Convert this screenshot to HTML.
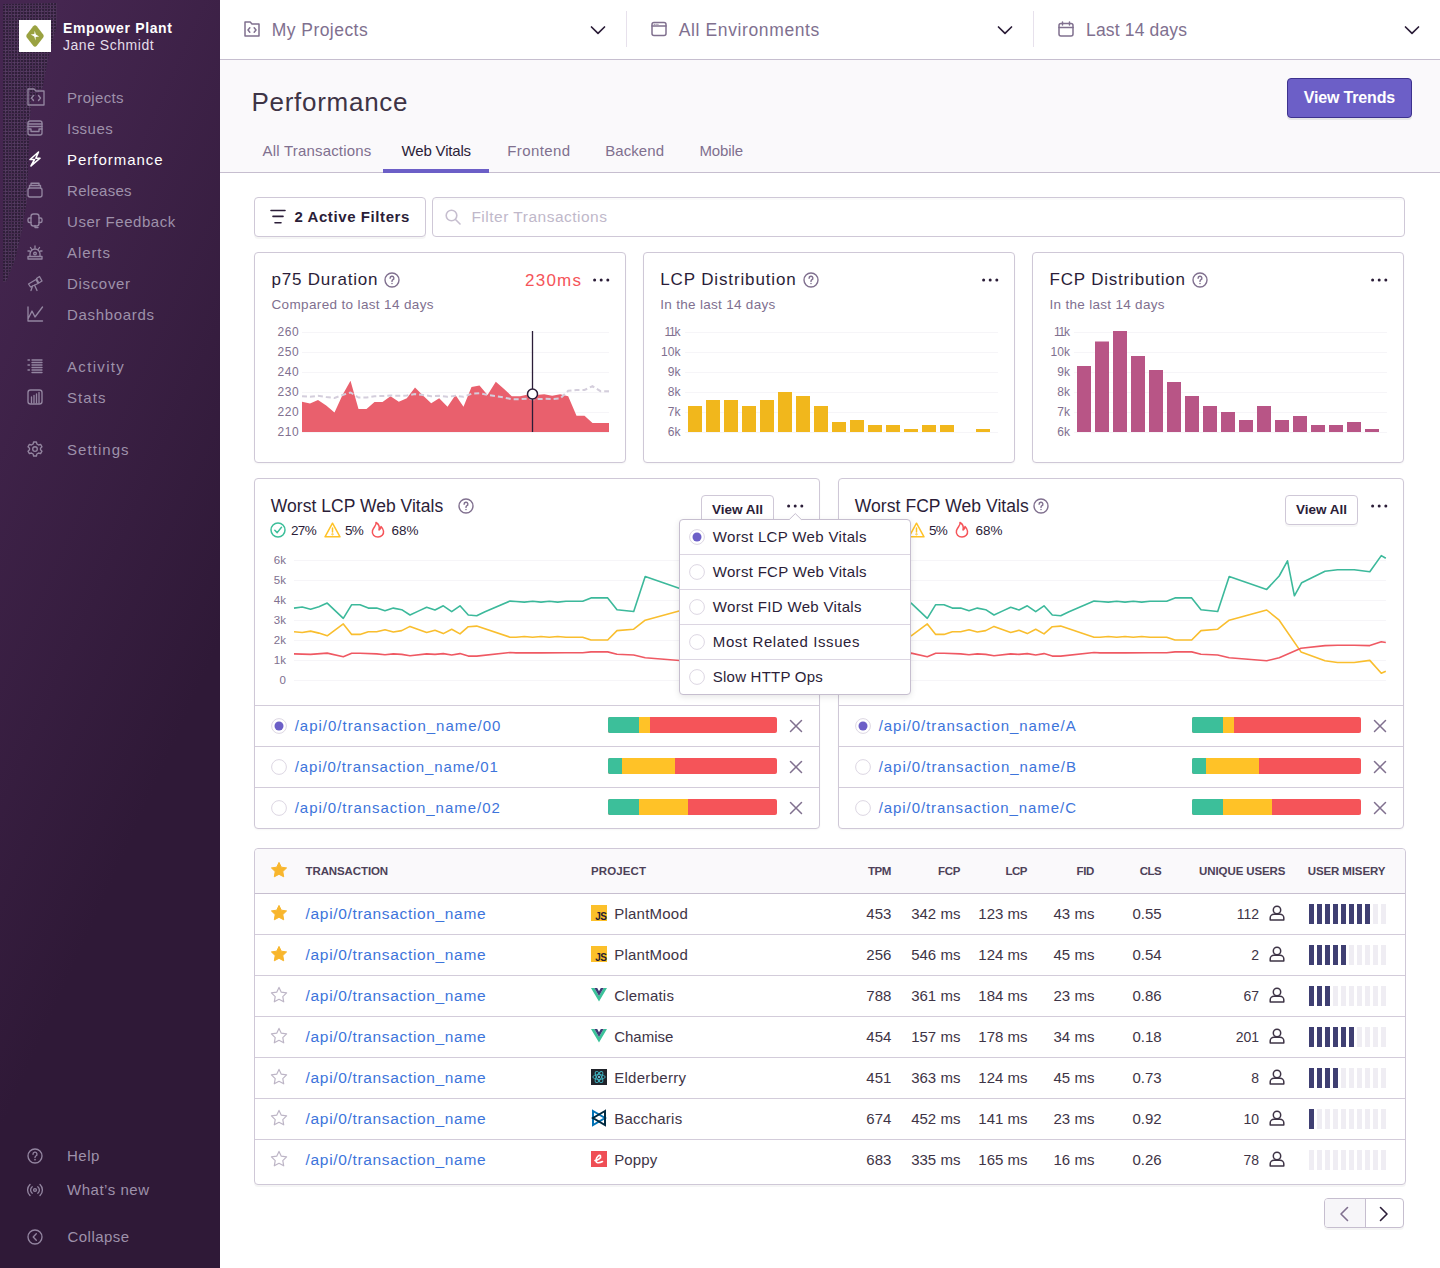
<!DOCTYPE html>
<html><head><meta charset="utf-8"><title>Performance</title><style>
*{box-sizing:border-box}
html,body{margin:0;padding:0;width:1440px;height:1268px;overflow:hidden;background:#fff}
body{position:relative;font-family:"Liberation Sans",sans-serif}
.t{position:absolute;white-space:pre;line-height:1;}
.ic{position:absolute;overflow:visible}
.card{position:absolute;border:1px solid #CFC8D7;border-radius:4px;background:#fff;box-shadow:0 1px 2px rgba(0,0,0,0.04)}
#sb{position:absolute;left:0;top:0;width:220px;height:1268px;background:linear-gradient(294.17deg,#2f1937 35.57%,#452650 92.42%,#452650 92.42%)}
#sbtex{position:absolute;left:0;top:0;width:70px;height:300px;
 background-color:rgba(100,92,112,0.20);
 background-image:radial-gradient(circle at 1px 1px, rgba(30,20,40,0.6) 0.8px, transparent 1.1px),radial-gradient(circle at 1px 1px, rgba(140,130,165,0.25) 0.6px, transparent 0.9px);
 background-size:3px 3px,4px 4px;background-position:0 0,1px 2px;
 clip-path:polygon(3px 4px,57px 3px,57px 25px,50px 50px,45px 75px,42px 90px,31px 100px,29px 140px,27px 200px,22px 230px,15px 260px,6px 282px,3px 282px)}
</style></head>
<body>
<div id='sb'></div><div id='sbtex'></div>
<div style='position:absolute;left:19px;top:20px;width:32px;height:32px;background:#fff'></div>
<svg class='ic' style='left:19px;top:20px;width:32px;height:32px;' viewBox='0 0 32 32'><path d='M16 5.2 Q17 5.2 17.8 6.2 L24.2 14.4 Q25.4 16 24.2 17.6 L17.8 25.8 Q17 26.8 16 26.8 Q15 26.8 14.2 25.8 L7.8 17.6 Q6.6 16 7.8 14.4 L14.2 6.2 Q15 5.2 16 5.2 Z' fill='#9AA241'/><path d='M15.7 10.8 L16.9 14.6 L20.2 16.5 L16.7 16.9 L16.5 20.4 L15.2 16.4 L11.7 14.5 L15.3 14.1 Z' fill='#fff'/></svg>
<div class='t' style='left:63.00px;top:21.15px;font-size:14px;color:#FFFFFF;font-weight:700;letter-spacing:0.655px;'>Empower Plant</div>
<div class='t' style='left:63.00px;top:37.95px;font-size:14px;color:#E4DDE9;letter-spacing:0.525px;'>Jane Schmidt</div>
<div class='t' style='left:67.00px;top:89.90px;font-size:15px;color:#9E91AA;letter-spacing:0.330px;'>Projects</div>
<div class='t' style='left:67.00px;top:120.90px;font-size:15px;color:#9E91AA;letter-spacing:0.468px;'>Issues</div>
<div class='t' style='left:67.00px;top:151.90px;font-size:15px;color:#FFFFFF;letter-spacing:0.983px;'>Performance</div>
<div class='t' style='left:67.00px;top:182.90px;font-size:15px;color:#9E91AA;letter-spacing:0.293px;'>Releases</div>
<div class='t' style='left:67.00px;top:213.90px;font-size:15px;color:#9E91AA;letter-spacing:0.548px;'>User Feedback</div>
<div class='t' style='left:67.00px;top:244.90px;font-size:15px;color:#9E91AA;letter-spacing:0.911px;'>Alerts</div>
<div class='t' style='left:67.00px;top:275.90px;font-size:15px;color:#9E91AA;letter-spacing:0.677px;'>Discover</div>
<div class='t' style='left:67.00px;top:306.90px;font-size:15px;color:#9E91AA;letter-spacing:0.690px;'>Dashboards</div>
<div class='t' style='left:67.00px;top:358.90px;font-size:15px;color:#9E91AA;letter-spacing:1.326px;'>Activity</div>
<div class='t' style='left:67.00px;top:389.90px;font-size:15px;color:#9E91AA;letter-spacing:1.053px;'>Stats</div>
<div class='t' style='left:67.00px;top:441.90px;font-size:15px;color:#9E91AA;letter-spacing:1.057px;'>Settings</div>
<div class='t' style='left:67.00px;top:1148.10px;font-size:15px;color:#9E91AA;letter-spacing:0.480px;'>Help</div>
<div class='t' style='left:67.00px;top:1182.10px;font-size:15px;color:#9E91AA;letter-spacing:0.526px;'>What’s new</div>
<div class='t' style='left:67.50px;top:1229.10px;font-size:15px;color:#9E91AA;letter-spacing:0.475px;'>Collapse</div>
<svg class='ic' style='left:27px;top:88px;width:18px;height:18px;' viewBox='0 0 18 18'><path d='M1 1 H7 L9 3 H17 V17 H1 Z' stroke='#9385A0' stroke-width='1.35' fill='none' stroke-linejoin='round' stroke-linecap='round'/><path d='M6.5 7.5 L4.5 10 L6.5 12.5 M11.5 7.5 L13.5 10 L11.5 12.5' stroke='#9385A0' stroke-width='1.35' fill='none' stroke-linejoin='round' stroke-linecap='round'/></svg>
<svg class='ic' style='left:27px;top:120px;width:16px;height:16px;' viewBox='0 0 16 16'><rect x='1' y='1' width='14' height='14' rx='2' stroke='#9385A0' stroke-width='1.35' fill='none' stroke-linejoin='round' stroke-linecap='round'/><path d='M1 4 H15 M1 6.5 H15 M1 9 H4 V11.5 H12 V9 H15' stroke='#9385A0' stroke-width='1.35' fill='none' stroke-linejoin='round' stroke-linecap='round'/></svg>
<svg class='ic' style='left:28px;top:151px;width:14px;height:16px;' viewBox='0 0 14 16'><path d='M10.5 1 L2 8.5 L6.5 8.5 L3 15 L12 7.2 L7.8 7.2 Z' stroke='#FFFFFF' stroke-width='1.6' fill='none' stroke-linejoin='round' stroke-linecap='round'/></svg>
<svg class='ic' style='left:27px;top:182px;width:16px;height:16px;' viewBox='0 0 16 16'><rect x='1' y='6' width='14' height='9' rx='2' stroke='#9385A0' stroke-width='1.35' fill='none' stroke-linejoin='round' stroke-linecap='round'/><path d='M2.5 6 V3.5 H13.5 V6 M4 3.5 V1.2 H12 V3.5' stroke='#9385A0' stroke-width='1.35' fill='none' stroke-linejoin='round' stroke-linecap='round'/></svg>
<svg class='ic' style='left:27px;top:213px;width:16px;height:16px;' viewBox='0 0 16 16'><rect x='4' y='1' width='8' height='12' rx='2.5' stroke='#9385A0' stroke-width='1.35' fill='none' stroke-linejoin='round' stroke-linecap='round'/><path d='M4 5 H2.5 A1.5 1.5 0 0 0 1 6.5 V8 A1.5 1.5 0 0 0 2.5 9.5 H4 M12 5 H13.5 A1.5 1.5 0 0 1 15 6.5 V8 A1.5 1.5 0 0 1 13.5 9.5 H12 M8 12.5 V14.5 H11' stroke='#9385A0' stroke-width='1.35' fill='none' stroke-linejoin='round' stroke-linecap='round'/></svg>
<svg class='ic' style='left:27px;top:244px;width:16px;height:16px;' viewBox='0 0 16 16'><path d='M1 15 H15 V12.5 H1 Z M3 12.5 V10 A5 5 0 0 1 13 10 V12.5 M8 2 V4 M3.5 3.5 L4.5 5 M12.5 3.5 L11.5 5 M1 7 H2.5 M13.5 7 H15' stroke='#9385A0' stroke-width='1.35' fill='none' stroke-linejoin='round' stroke-linecap='round'/><circle cx='8' cy='9.5' r='1.3' stroke='#9385A0' stroke-width='1.35' fill='none' stroke-linejoin='round' stroke-linecap='round'/></svg>
<svg class='ic' style='left:27px;top:275px;width:16px;height:16px;' viewBox='0 0 16 16'><path d='M1.5 9 L9 4.5 L11 8.5 L3.5 12 Z M9.5 3.5 L12.5 1.5 L15 6 L11.8 8 Z M5.5 11 L4 15.5 M7.5 10 L10 15.5' stroke='#9385A0' stroke-width='1.35' fill='none' stroke-linejoin='round' stroke-linecap='round'/></svg>
<svg class='ic' style='left:27px;top:306px;width:16px;height:16px;' viewBox='0 0 16 16'><path d='M1 1 V15 H15.5 M1 13 L5 5 L8 11 L15.5 1' stroke='#9385A0' stroke-width='1.35' fill='none' stroke-linejoin='round' stroke-linecap='round'/></svg>
<svg class='ic' style='left:27px;top:358px;width:16px;height:16px;' viewBox='0 0 16 16'><path d='M1 2 H2.5 M1 7 H2.5 M1 12 H2.5 M5 2 H15 M5 4.5 H15 M5 7 H15 M5 9.5 H15 M5 12 H15 M5 14.5 H15' stroke='#9385A0' stroke-width='1.35' fill='none' stroke-linejoin='round' stroke-linecap='round'/></svg>
<svg class='ic' style='left:27px;top:389px;width:16px;height:16px;' viewBox='0 0 16 16'><rect x='1' y='1' width='14' height='14' rx='2.5' stroke='#9385A0' stroke-width='1.35' fill='none' stroke-linejoin='round' stroke-linecap='round'/><path d='M4.5 14 V8 M7 14 V6.5 M9.5 14 V5 M12 14 V3.5' stroke='#9385A0' stroke-width='1.35' fill='none' stroke-linejoin='round' stroke-linecap='round'/></svg>
<svg class='ic' style='left:27px;top:441px;width:16px;height:16px;' viewBox='0 0 16 16'><path d='M6.6 1 H9.4 L9.9 3 L11.6 4 L13.6 3.4 L15 5.8 L13.5 7.2 V8.8 L15 10.2 L13.6 12.6 L11.6 12 L9.9 13 L9.4 15 H6.6 L6.1 13 L4.4 12 L2.4 12.6 L1 10.2 L2.5 8.8 V7.2 L1 5.8 L2.4 3.4 L4.4 4 L6.1 3 Z' stroke='#9385A0' stroke-width='1.35' fill='none' stroke-linejoin='round' stroke-linecap='round'/><circle cx='8' cy='8' r='2.3' stroke='#9385A0' stroke-width='1.35' fill='none' stroke-linejoin='round' stroke-linecap='round'/></svg>
<svg class='ic' style='left:27px;top:1148px;width:16px;height:16px;' viewBox='0 0 16 16'><circle cx='8' cy='8' r='7' stroke='#9385A0' stroke-width='1.35' fill='none' stroke-linejoin='round' stroke-linecap='round'/><path d='M6 6.3 A2 2 0 1 1 8.8 8 C8.2 8.4 8 8.8 8 9.5' stroke='#9385A0' stroke-width='1.35' fill='none' stroke-linejoin='round' stroke-linecap='round'/><circle cx='8' cy='11.7' r='0.5' fill='#9385A0' stroke='#9385A0' stroke-width='0.8'/></svg>
<svg class='ic' style='left:27px;top:1182px;width:16px;height:16px;' viewBox='0 0 16 16'><circle cx='8' cy='8' r='1.4' stroke='#9385A0' stroke-width='1.35' fill='none' stroke-linejoin='round' stroke-linecap='round'/><path d='M5.2 4.8 A4 4 0 0 0 5.2 11.2 M10.8 4.8 A4 4 0 0 1 10.8 11.2 M3 2.5 A7.5 7.5 0 0 0 3 13.5 M13 2.5 A7.5 7.5 0 0 1 13 13.5' stroke='#9385A0' stroke-width='1.35' fill='none' stroke-linejoin='round' stroke-linecap='round'/></svg>
<svg class='ic' style='left:27px;top:1229px;width:16px;height:16px;' viewBox='0 0 16 16'><circle cx='8' cy='8' r='7' stroke='#9385A0' stroke-width='1.35' fill='none' stroke-linejoin='round' stroke-linecap='round'/><path d='M9.3 4.8 L6.2 8 L9.3 11.2' stroke='#9385A0' stroke-width='1.35' fill='none' stroke-linejoin='round' stroke-linecap='round'/></svg>
<div style='position:absolute;left:220px;top:0;width:1220px;height:60px;background:#fff;border-bottom:1px solid #C6BECF'></div>
<svg class='ic' style='left:244px;top:21px;width:16px;height:16px;' viewBox='0 0 16 16'><path d='M1 1 H6.2 L8 3 H15 V15 H1 Z' stroke='#80708F' stroke-width='1.5' fill='none' stroke-linejoin='round' stroke-linecap='round'/><path d='M5.8 6.8 L4 9 L5.8 11.2 M10.2 6.8 L12 9 L10.2 11.2' stroke='#80708F' stroke-width='1.5' fill='none' stroke-linejoin='round' stroke-linecap='round'/></svg>
<div class='t' style='left:271.70px;top:22.19px;font-size:17.5px;color:#80708F;letter-spacing:0.459px;'>My Projects</div>
<svg class='ic' style='left:590px;top:25px;width:16px;height:10px;' viewBox='0 0 16 10'><path d='M1.5 2 L8 8.3 L14.5 2' stroke='#2B1D38' stroke-width='1.7' fill='none' stroke-linejoin='round' stroke-linecap='round'/></svg>
<div style='position:absolute;left:626px;top:11px;width:1px;height:36px;background:#E7E1EC'></div>
<svg class='ic' style='left:651px;top:21px;width:16px;height:16px;' viewBox='0 0 16 16'><rect x='1' y='1.5' width='14' height='13' rx='2' stroke='#80708F' stroke-width='1.5' fill='none' stroke-linejoin='round' stroke-linecap='round'/><path d='M1 5 H15' stroke='#80708F' stroke-width='1.5' fill='none' stroke-linejoin='round' stroke-linecap='round'/><path d='M3.2 3.3 H3.4 M5 3.3 H5.2 M6.8 3.3 H7' stroke='#80708F' stroke-width='1.1' stroke-linecap='round'/></svg>
<div class='t' style='left:678.75px;top:22.39px;font-size:17.5px;color:#80708F;letter-spacing:0.619px;'>All Environments</div>
<svg class='ic' style='left:997px;top:25px;width:16px;height:10px;' viewBox='0 0 16 10'><path d='M1.5 2 L8 8.3 L14.5 2' stroke='#2B1D38' stroke-width='1.7' fill='none' stroke-linejoin='round' stroke-linecap='round'/></svg>
<div style='position:absolute;left:1033px;top:11px;width:1px;height:36px;background:#E7E1EC'></div>
<svg class='ic' style='left:1058px;top:21px;width:16px;height:16px;' viewBox='0 0 16 16'><rect x='1' y='2.5' width='14' height='12.5' rx='2' stroke='#80708F' stroke-width='1.5' fill='none' stroke-linejoin='round' stroke-linecap='round'/><path d='M1 6.5 H15 M4.5 1 V4 M11.5 1 V4' stroke='#80708F' stroke-width='1.5' fill='none' stroke-linejoin='round' stroke-linecap='round'/></svg>
<div class='t' style='left:1086.00px;top:22.39px;font-size:17.5px;color:#80708F;letter-spacing:0.161px;'>Last 14 days</div>
<svg class='ic' style='left:1404px;top:25px;width:16px;height:10px;' viewBox='0 0 16 10'><path d='M1.5 2 L8 8.3 L14.5 2' stroke='#2B1D38' stroke-width='1.7' fill='none' stroke-linejoin='round' stroke-linecap='round'/></svg>
<div style='position:absolute;left:220px;top:60px;width:1220px;height:113px;background:#FAF9FB;border-bottom:1px solid #C6BECF'></div>
<div class='t' style='left:251.50px;top:89.19px;font-size:26px;color:#3E3446;letter-spacing:0.716px;'>Performance</div>
<div style='position:absolute;left:1287px;top:78px;width:125px;height:40px;background:#6C5FC7;border:1px solid #3D328E;border-radius:4px;box-shadow:0 2px 0 rgba(0,0,0,0.08)'></div>
<div class='t' style='left:1303.80px;top:90.06px;font-size:16px;color:#FFFFFF;font-weight:700;letter-spacing:-0.168px;'>View Trends</div>
<div class='t' style='left:262.60px;top:143.30px;font-size:15px;color:#80708F;letter-spacing:0.187px;'>All Transactions</div>
<div class='t' style='left:401.60px;top:143.30px;font-size:15px;color:#2B1D38;letter-spacing:-0.184px;'>Web Vitals</div>
<div class='t' style='left:507.25px;top:143.30px;font-size:15px;color:#80708F;letter-spacing:0.393px;'>Frontend</div>
<div class='t' style='left:605.30px;top:143.30px;font-size:15px;color:#80708F;letter-spacing:0.054px;'>Backend</div>
<div class='t' style='left:699.40px;top:143.30px;font-size:15px;color:#80708F;letter-spacing:-0.097px;'>Mobile</div>
<div style='position:absolute;left:383px;top:169px;width:106px;height:4px;background:#6C5FC7'></div>
<div class='card' style='left:254px;top:197px;width:172px;height:40px;box-shadow:0 2px 0 rgba(0,0,0,0.04)'></div>
<svg class='ic' style='left:270px;top:208px;width:16px;height:16px;' viewBox='0 0 16 16'><path d='M1 2.5 H15 M3 8.4 H13 M5 14.8 H11' stroke='#2B1D38' stroke-width='1.6' fill='none' stroke-linecap='round'/></svg>
<div class='t' style='left:294.40px;top:209.30px;font-size:15px;color:#2B1D38;font-weight:700;letter-spacing:0.589px;'>2 Active Filters</div>
<div class='card' style='left:432px;top:197px;width:973px;height:40px;box-shadow:inset 0 2px 0 rgba(0,0,0,0.02)'></div>
<svg class='ic' style='left:445px;top:209px;width:16px;height:16px;' viewBox='0 0 16 16'><circle cx='6.5' cy='6.5' r='5.3' stroke='#C6BECF' stroke-width='1.6' fill='none' stroke-linecap='round'/><path d='M10.5 10.5 L15 15' stroke='#C6BECF' stroke-width='1.6' fill='none' stroke-linecap='round'/></svg>
<div class='t' style='left:471.40px;top:209.38px;font-size:15.5px;color:#C0B8CA;letter-spacing:0.498px;'>Filter Transactions</div>
<div class='card' style='left:254px;top:252px;width:372px;height:211px;'></div>
<div class='t' style='left:271.50px;top:271.41px;font-size:17px;color:#2B1D38;letter-spacing:0.787px;'>p75 Duration</div>
<svg class='ic' style='left:384px;top:272px;width:16px;height:16px;' viewBox='0 0 16 16'><circle cx='8' cy='8' r='7' stroke='#80708F' stroke-width='1.4' fill='none' stroke-linecap='round'/><path d='M6.1 6.2 A1.9 1.9 0 1 1 8.7 7.9 C8.1 8.3 8 8.7 8 9.4' stroke='#80708F' stroke-width='1.4' fill='none' stroke-linecap='round'/><circle cx='8' cy='11.6' r='0.45' fill='#80708F' stroke='#80708F' stroke-width='0.7'/></svg>
<div class='t' style='left:525.00px;top:271.61px;font-size:17px;color:#F55459;letter-spacing:1.242px;'>230ms</div>
<svg class='ic' style='left:592.5px;top:278px;width:18px;height:4px;' viewBox='0 0 18 4'><circle cx='1.6' cy='2' r='1.5' fill='#2B1D38'/><circle cx='8.2' cy='2' r='1.5' fill='#2B1D38'/><circle cx='14.8' cy='2' r='1.5' fill='#2B1D38'/></svg>
<div class='t' style='left:271.50px;top:297.57px;font-size:13.5px;color:#80708F;letter-spacing:0.355px;'>Compared to last 14 days</div>
<div style='position:absolute;left:302px;top:332px;width:307px;height:1px;background:#F6F5F8'></div>
<div style='position:absolute;left:302px;top:352px;width:307px;height:1px;background:#F6F5F8'></div>
<div style='position:absolute;left:302px;top:372px;width:307px;height:1px;background:#F6F5F8'></div>
<div style='position:absolute;left:302px;top:392px;width:307px;height:1px;background:#F6F5F8'></div>
<div style='position:absolute;left:302px;top:412px;width:307px;height:1px;background:#F6F5F8'></div>
<div style='position:absolute;left:302px;top:432px;width:307px;height:1px;background:#F6F5F8'></div>
<div class='t' style='left:277.60px;top:326.04px;font-size:12px;color:#80708F;letter-spacing:0.484px;'>260</div>
<div class='t' style='left:277.60px;top:346.04px;font-size:12px;color:#80708F;letter-spacing:0.484px;'>250</div>
<div class='t' style='left:277.60px;top:366.04px;font-size:12px;color:#80708F;letter-spacing:0.484px;'>240</div>
<div class='t' style='left:277.60px;top:386.04px;font-size:12px;color:#80708F;letter-spacing:0.484px;'>230</div>
<div class='t' style='left:277.60px;top:406.04px;font-size:12px;color:#80708F;letter-spacing:0.484px;'>220</div>
<div class='t' style='left:277.60px;top:426.04px;font-size:12px;color:#80708F;letter-spacing:0.484px;'>210</div>
<svg class='ic' style='left:0;top:0;width:1440px;height:1268px' viewBox='0 0 1440 1268'><path d='M302 432 L302.0 401.8 L310.0 403.5 L318.0 400.0 L326.2 405.5 L334.5 412.5 L342.5 395.0 L350.5 380.8 L358.5 409.0 L366.5 409.0 L374.5 402.0 L382.5 402.0 L390.5 396.2 L398.8 401.8 L406.8 398.2 L415.0 387.5 L423.0 395.5 L431.2 403.2 L439.2 398.2 L447.5 406.8 L455.5 395.0 L463.5 406.8 L471.5 387.0 L479.5 385.5 L487.5 395.0 L495.8 381.8 L503.8 388.8 L511.8 396.2 L520.0 396.2 L528.0 394.5 L536.0 395.0 L544.2 394.2 L552.2 395.8 L560.2 394.2 L568.2 396.2 L576.5 415.8 L584.5 415.8 L592.5 423.0 L600.5 423.0 L609.0 423.0 L609 432 Z' fill='#E9606D'/><path d='M302.0 396.2 L310.0 396.8 L318.0 395.8 L326.2 397.0 L334.5 398.0 L342.5 395.0 L350.5 392.5 L358.5 397.5 L366.5 397.5 L374.5 396.2 L382.5 396.0 L390.5 395.5 L398.8 395.8 L406.8 395.5 L415.0 394.0 L423.0 395.0 L431.2 396.2 L439.2 395.8 L447.5 396.8 L455.5 395.8 L463.5 396.8 L471.5 393.8 L479.5 393.2 L487.5 395.0 L495.8 396.2 L503.8 397.5 L511.8 399.2 L520.0 399.2 L528.0 398.8 L536.0 399.2 L544.2 398.8 L552.2 399.0 L560.2 398.5 L568.2 390.8 L576.5 390.0 L584.5 390.0 L592.5 386.2 L600.5 391.2 L609.0 391.2' fill='none' stroke='#D4CEDC' stroke-width='2' stroke-dasharray='5 3'/><path d='M532.5 331 V432' stroke='#2B1D38' stroke-width='1.3'/><circle cx='532.5' cy='394' r='5' fill='#fff' stroke='#2B1D38' stroke-width='1.5'/></svg>
<div class='card' style='left:643px;top:252px;width:372px;height:211px;'></div>
<div class='t' style='left:660.30px;top:271.41px;font-size:17px;color:#2B1D38;letter-spacing:0.858px;'>LCP Distribution</div>
<svg class='ic' style='left:803px;top:272px;width:16px;height:16px;' viewBox='0 0 16 16'><circle cx='8' cy='8' r='7' stroke='#80708F' stroke-width='1.4' fill='none' stroke-linecap='round'/><path d='M6.1 6.2 A1.9 1.9 0 1 1 8.7 7.9 C8.1 8.3 8 8.7 8 9.4' stroke='#80708F' stroke-width='1.4' fill='none' stroke-linecap='round'/><circle cx='8' cy='11.6' r='0.45' fill='#80708F' stroke='#80708F' stroke-width='0.7'/></svg>
<svg class='ic' style='left:981.5px;top:278px;width:18px;height:4px;' viewBox='0 0 18 4'><circle cx='1.6' cy='2' r='1.5' fill='#2B1D38'/><circle cx='8.2' cy='2' r='1.5' fill='#2B1D38'/><circle cx='14.8' cy='2' r='1.5' fill='#2B1D38'/></svg>
<div class='t' style='left:660.30px;top:297.57px;font-size:13.5px;color:#80708F;letter-spacing:0.301px;'>In the last 14 days</div>
<div style='position:absolute;left:685px;top:332px;width:313px;height:1px;background:#F6F5F8'></div>
<div style='position:absolute;left:685px;top:352px;width:313px;height:1px;background:#F6F5F8'></div>
<div style='position:absolute;left:685px;top:372px;width:313px;height:1px;background:#F6F5F8'></div>
<div style='position:absolute;left:685px;top:392px;width:313px;height:1px;background:#F6F5F8'></div>
<div style='position:absolute;left:685px;top:412px;width:313px;height:1px;background:#F6F5F8'></div>
<div style='position:absolute;left:685px;top:432px;width:313px;height:1px;background:#F6F5F8'></div>
<div class='t' style='left:664.50px;top:326.04px;font-size:12px;color:#80708F;letter-spacing:-1.234px;'>11k</div>
<div class='t' style='left:661.00px;top:346.04px;font-size:12px;color:#80708F;letter-spacing:0.070px;'>10k</div>
<div class='t' style='left:667.81px;top:366.04px;font-size:12px;color:#80708F;'>9k</div>
<div class='t' style='left:667.81px;top:386.04px;font-size:12px;color:#80708F;'>8k</div>
<div class='t' style='left:667.81px;top:406.04px;font-size:12px;color:#80708F;'>7k</div>
<div class='t' style='left:667.81px;top:426.04px;font-size:12px;color:#80708F;'>6k</div>
<div class='card' style='left:1032px;top:252px;width:372px;height:211px;'></div>
<div class='t' style='left:1049.50px;top:271.41px;font-size:17px;color:#2B1D38;letter-spacing:0.803px;'>FCP Distribution</div>
<svg class='ic' style='left:1192px;top:272px;width:16px;height:16px;' viewBox='0 0 16 16'><circle cx='8' cy='8' r='7' stroke='#80708F' stroke-width='1.4' fill='none' stroke-linecap='round'/><path d='M6.1 6.2 A1.9 1.9 0 1 1 8.7 7.9 C8.1 8.3 8 8.7 8 9.4' stroke='#80708F' stroke-width='1.4' fill='none' stroke-linecap='round'/><circle cx='8' cy='11.6' r='0.45' fill='#80708F' stroke='#80708F' stroke-width='0.7'/></svg>
<svg class='ic' style='left:1370.5px;top:278px;width:18px;height:4px;' viewBox='0 0 18 4'><circle cx='1.6' cy='2' r='1.5' fill='#2B1D38'/><circle cx='8.2' cy='2' r='1.5' fill='#2B1D38'/><circle cx='14.8' cy='2' r='1.5' fill='#2B1D38'/></svg>
<div class='t' style='left:1049.50px;top:297.57px;font-size:13.5px;color:#80708F;letter-spacing:0.301px;'>In the last 14 days</div>
<div style='position:absolute;left:1074px;top:332px;width:313px;height:1px;background:#F6F5F8'></div>
<div style='position:absolute;left:1074px;top:352px;width:313px;height:1px;background:#F6F5F8'></div>
<div style='position:absolute;left:1074px;top:372px;width:313px;height:1px;background:#F6F5F8'></div>
<div style='position:absolute;left:1074px;top:392px;width:313px;height:1px;background:#F6F5F8'></div>
<div style='position:absolute;left:1074px;top:412px;width:313px;height:1px;background:#F6F5F8'></div>
<div style='position:absolute;left:1074px;top:432px;width:313px;height:1px;background:#F6F5F8'></div>
<div class='t' style='left:1054.00px;top:326.04px;font-size:12px;color:#80708F;letter-spacing:-1.234px;'>11k</div>
<div class='t' style='left:1050.50px;top:346.04px;font-size:12px;color:#80708F;letter-spacing:0.070px;'>10k</div>
<div class='t' style='left:1057.31px;top:366.04px;font-size:12px;color:#80708F;'>9k</div>
<div class='t' style='left:1057.31px;top:386.04px;font-size:12px;color:#80708F;'>8k</div>
<div class='t' style='left:1057.31px;top:406.04px;font-size:12px;color:#80708F;'>7k</div>
<div class='t' style='left:1057.31px;top:426.04px;font-size:12px;color:#80708F;'>6k</div>
<svg class='ic' style='left:0;top:0;width:1440px;height:1268px' viewBox='0 0 1440 1268'><rect x='688' y='406' width='14' height='26' fill='#F1B71C'/><rect x='706' y='400' width='14' height='32' fill='#F1B71C'/><rect x='724' y='400' width='14' height='32' fill='#F1B71C'/><rect x='742' y='406' width='14' height='26' fill='#F1B71C'/><rect x='760' y='400' width='14' height='32' fill='#F1B71C'/><rect x='778' y='392' width='14' height='40' fill='#F1B71C'/><rect x='796' y='396' width='14' height='36' fill='#F1B71C'/><rect x='814' y='406' width='14' height='26' fill='#F1B71C'/><rect x='832' y='422' width='14' height='10' fill='#F1B71C'/><rect x='850' y='420' width='14' height='12' fill='#F1B71C'/><rect x='868' y='425' width='14' height='7' fill='#F1B71C'/><rect x='886' y='425' width='14' height='7' fill='#F1B71C'/><rect x='904' y='429' width='14' height='3' fill='#F1B71C'/><rect x='922' y='425' width='14' height='7' fill='#F1B71C'/><rect x='940' y='425' width='14' height='7' fill='#F1B71C'/><rect x='976' y='429' width='14' height='3' fill='#F1B71C'/><rect x='1077' y='366' width='14' height='66' fill='#B85586'/><rect x='1095' y='341.5' width='14' height='90.5' fill='#B85586'/><rect x='1113' y='331' width='14' height='101' fill='#B85586'/><rect x='1131' y='356' width='14' height='76' fill='#B85586'/><rect x='1149' y='370' width='14' height='62' fill='#B85586'/><rect x='1167' y='382' width='14' height='50' fill='#B85586'/><rect x='1185' y='396' width='14' height='36' fill='#B85586'/><rect x='1203' y='406' width='14' height='26' fill='#B85586'/><rect x='1221' y='412' width='14' height='20' fill='#B85586'/><rect x='1239' y='420' width='14' height='12' fill='#B85586'/><rect x='1257' y='406' width='14' height='26' fill='#B85586'/><rect x='1275' y='420' width='14' height='12' fill='#B85586'/><rect x='1293' y='416' width='14' height='16' fill='#B85586'/><rect x='1311' y='425' width='14' height='7' fill='#B85586'/><rect x='1329' y='425' width='14' height='7' fill='#B85586'/><rect x='1347' y='422' width='14' height='10' fill='#B85586'/><rect x='1365' y='429' width='14' height='3' fill='#B85586'/></svg>
<div class='card' style='left:254px;top:478px;width:566px;height:351px;'></div>
<div class='t' style='left:270.80px;top:497.99px;font-size:17.5px;color:#2B1D38;letter-spacing:0.029px;'>Worst LCP Web Vitals</div>
<svg class='ic' style='left:458px;top:498px;width:16px;height:16px;' viewBox='0 0 16 16'><circle cx='8' cy='8' r='7' stroke='#80708F' stroke-width='1.4' fill='none' stroke-linecap='round'/><path d='M6.1 6.2 A1.9 1.9 0 1 1 8.7 7.9 C8.1 8.3 8 8.7 8 9.4' stroke='#80708F' stroke-width='1.4' fill='none' stroke-linecap='round'/><circle cx='8' cy='11.6' r='0.45' fill='#80708F' stroke='#80708F' stroke-width='0.7'/></svg>
<svg class='ic' style='left:270px;top:522px;width:16px;height:16px;' viewBox='0 0 16 16'><circle cx='8' cy='8' r='7' stroke='#3CBF9A' fill='none' stroke-width='1.5' stroke-linecap='round' stroke-linejoin='round'/><path d='M4.8 8.2 L7.2 10.6 L11.5 5.3' stroke='#3CBF9A' fill='none' stroke-width='1.5' stroke-linecap='round' stroke-linejoin='round'/></svg>
<div class='t' style='left:291.00px;top:523.57px;font-size:13.5px;color:#2B1D38;letter-spacing:-0.666px;'>27%</div>
<svg class='ic' style='left:323.5px;top:522px;width:17px;height:16px;' viewBox='0 0 17 16'><path d='M8.5 1.2 L16 14.8 H1 Z' stroke='#FFC227' fill='none' stroke-width='1.5' stroke-linecap='round' stroke-linejoin='round'/><path d='M8.5 6 V10' stroke='#FFC227' fill='none' stroke-width='1.5' stroke-linecap='round' stroke-linejoin='round'/><circle cx='8.5' cy='12.3' r='0.4' stroke='#FFC227' fill='none' stroke-width='1.5' stroke-linecap='round' stroke-linejoin='round'/></svg>
<div class='t' style='left:345.00px;top:523.57px;font-size:13.5px;color:#2B1D38;letter-spacing:-0.816px;'>5%</div>
<svg class='ic' style='left:371px;top:521px;width:14px;height:17px;' viewBox='0 0 14 17'><path d='M5 1.5 C6 4 2.5 6 1.5 9.5 C0.5 13.5 3.5 16 7 16 C10.5 16 13 13.5 12.5 10 C12.2 8 11 6.5 10 5.5 C10 7.5 9 8.5 8 9 C8.8 6 7.5 3 5 1.5 Z' stroke='#F55459' fill='none' stroke-width='1.5' stroke-linecap='round' stroke-linejoin='round'/></svg>
<div class='t' style='left:391.50px;top:523.57px;font-size:13.5px;color:#2B1D38;letter-spacing:-0.066px;'>68%</div>
<div class='card' style='left:701px;top:495px;width:73px;height:30px;border-radius:4px;box-shadow:0 2px 0 rgba(0,0,0,0.03)'></div>
<div class='t' style='left:712.00px;top:503.37px;font-size:13.5px;color:#2B1D38;font-weight:700;'>View All</div>
<svg class='ic' style='left:787.1px;top:504px;width:18px;height:4px;' viewBox='0 0 18 4'><circle cx='1.6' cy='2' r='1.5' fill='#2B1D38'/><circle cx='8.2' cy='2' r='1.5' fill='#2B1D38'/><circle cx='14.8' cy='2' r='1.5' fill='#2B1D38'/></svg>
<div style='position:absolute;left:294px;top:560px;width:508px;height:1px;background:#F6F5F8'></div>
<div style='position:absolute;left:294px;top:580px;width:508px;height:1px;background:#F6F5F8'></div>
<div style='position:absolute;left:294px;top:600px;width:508px;height:1px;background:#F6F5F8'></div>
<div style='position:absolute;left:294px;top:620px;width:508px;height:1px;background:#F6F5F8'></div>
<div style='position:absolute;left:294px;top:640px;width:508px;height:1px;background:#F6F5F8'></div>
<div style='position:absolute;left:294px;top:660px;width:508px;height:1px;background:#F6F5F8'></div>
<div style='position:absolute;left:294px;top:680px;width:508px;height:1px;background:#F6F5F8'></div>
<div class='t' style='left:273.84px;top:554.67px;font-size:11.5px;color:#80708F;'>6k</div>
<div class='t' style='left:273.84px;top:574.67px;font-size:11.5px;color:#80708F;'>5k</div>
<div class='t' style='left:273.84px;top:594.67px;font-size:11.5px;color:#80708F;'>4k</div>
<div class='t' style='left:273.84px;top:614.67px;font-size:11.5px;color:#80708F;'>3k</div>
<div class='t' style='left:273.84px;top:634.67px;font-size:11.5px;color:#80708F;'>2k</div>
<div class='t' style='left:273.84px;top:654.67px;font-size:11.5px;color:#80708F;'>1k</div>
<div class='t' style='left:279.59px;top:674.67px;font-size:11.5px;color:#80708F;'>0</div>
<svg class='ic' style='left:0;top:0;width:1440px;height:1268px' viewBox='0 0 1440 1268'><path d='M294.0 608.1 L302.2 607.0 L310.6 609.2 L318.9 606.7 L327.2 603.1 L343.3 618.3 L351.7 604.7 L360.0 604.7 L368.3 608.1 L376.7 608.1 L385.0 610.8 L393.3 608.1 L401.7 609.7 L410.0 615.0 L418.3 611.1 L426.7 607.2 L435.0 610.0 L443.3 605.8 L451.7 611.7 L460.0 605.8 L468.3 615.0 L476.7 615.8 L485.0 611.7 L510.0 601.1 L516.0 601.5 L524.3 602.1 L532.7 601.3 L541.0 602.1 L549.3 601.3 L557.7 602.1 L566.0 601.3 L582.7 601.3 L591.0 597.9 L607.7 597.9 L617.0 609.8 L633.7 611.5 L645.2 576.5 L682.7 589.4 L695.2 576.0 L703.5 560.8 L710.4 595.8 L717.7 582.7 L741.0 571.2 L753.5 569.8 L770.2 569.8 L785.8 571.7 L797.3 555.6 L801.8 558.3' fill='none' stroke='#3CB99B' stroke-width='1.6' stroke-linejoin='round'/><path d='M294.0 631.7 L302.2 632.5 L310.6 631.1 L318.9 633.1 L327.2 635.8 L343.3 623.9 L351.7 634.4 L360.0 634.4 L368.3 631.7 L376.7 631.7 L385.0 629.7 L393.3 632.0 L401.7 630.6 L410.0 626.4 L418.3 629.4 L426.7 632.5 L435.0 630.3 L443.3 633.6 L451.7 629.2 L460.0 633.9 L468.3 626.7 L476.7 626.1 L510.0 637.2 L516.0 637.3 L524.3 636.5 L532.7 637.3 L541.0 636.5 L549.3 637.3 L557.7 636.5 L566.0 637.3 L582.7 637.3 L591.0 640.0 L607.7 640.0 L617.0 630.6 L633.7 629.2 L645.2 620.2 L682.7 610.0 L695.2 620.2 L717.0 651.9 L741.0 660.8 L753.5 662.5 L770.2 662.5 L785.8 660.4 L797.3 673.3 L801.8 671.3' fill='none' stroke='#F9BE2E' stroke-width='1.6' stroke-linejoin='round'/><path d='M294.0 653.9 L310.6 654.4 L327.2 653.1 L343.3 656.7 L351.7 653.3 L360.0 653.3 L376.7 653.9 L385.0 654.7 L393.3 653.9 L401.7 654.4 L410.0 655.8 L426.7 653.9 L435.0 654.4 L443.3 653.6 L451.7 655.0 L460.0 653.6 L468.3 656.1 L476.7 656.1 L510.0 652.5 L516.0 652.9 L541.0 652.9 L566.0 652.7 L582.7 652.7 L591.0 651.9 L607.7 651.9 L617.0 654.2 L633.7 655.0 L645.2 657.7 L682.7 660.8 L695.2 657.7 L717.0 648.3 L741.0 645.6 L753.5 645.2 L770.2 645.2 L785.8 645.6 L797.3 641.7 L801.8 642.5' fill='none' stroke='#EF5963' stroke-width='1.6' stroke-linejoin='round'/></svg>
<div style='position:absolute;left:255px;top:705px;width:564px;height:1px;background:#D3CCDA'></div>
<div style='position:absolute;left:255px;top:746px;width:564px;height:1px;background:#D3CCDA'></div>
<div style='position:absolute;left:255px;top:787px;width:564px;height:1px;background:#D3CCDA'></div>
<svg class='ic' style='left:271px;top:717.5px;width:16px;height:16px;' viewBox='0 0 16 16'><circle cx='8' cy='8' r='7.4' fill='#fff' stroke='#DDD7E3' stroke-width='1'/><circle cx='8' cy='8' r='4.5' fill='#6C5FC7'/></svg>
<div class='t' style='left:294.70px;top:717.70px;font-size:15px;color:#3D74DB;letter-spacing:0.990px;'>/api/0/transaction_name/00</div>
<div style='position:absolute;left:608px;top:717px;width:169px;height:16px;border-radius:2px;overflow:hidden;background:#F55459'><div style='position:absolute;left:0;top:0;width:31px;height:16px;background:#3CBF9A'></div><div style='position:absolute;left:31px;top:0;width:11px;height:16px;background:#FFC227'></div></div>
<svg class='ic' style='left:789px;top:718.5px;width:14px;height:14px;' viewBox='0 0 14 14'><path d='M1.5 1.5 L12.5 12.5 M12.5 1.5 L1.5 12.5' stroke='#80708F' stroke-width='1.5' stroke-linecap='round'/></svg>
<svg class='ic' style='left:271px;top:758.5px;width:16px;height:16px;' viewBox='0 0 16 16'><circle cx='8' cy='8' r='7.4' fill='#fff' stroke='#DDD7E3' stroke-width='1'/></svg>
<div class='t' style='left:294.70px;top:758.70px;font-size:15px;color:#3D74DB;letter-spacing:0.890px;'>/api/0/transaction_name/01</div>
<div style='position:absolute;left:608px;top:758px;width:169px;height:16px;border-radius:2px;overflow:hidden;background:#F55459'><div style='position:absolute;left:0;top:0;width:14px;height:16px;background:#3CBF9A'></div><div style='position:absolute;left:14px;top:0;width:53px;height:16px;background:#FFC227'></div></div>
<svg class='ic' style='left:789px;top:759.5px;width:14px;height:14px;' viewBox='0 0 14 14'><path d='M1.5 1.5 L12.5 12.5 M12.5 1.5 L1.5 12.5' stroke='#80708F' stroke-width='1.5' stroke-linecap='round'/></svg>
<svg class='ic' style='left:271px;top:799.5px;width:16px;height:16px;' viewBox='0 0 16 16'><circle cx='8' cy='8' r='7.4' fill='#fff' stroke='#DDD7E3' stroke-width='1'/></svg>
<div class='t' style='left:294.70px;top:799.70px;font-size:15px;color:#3D74DB;letter-spacing:0.966px;'>/api/0/transaction_name/02</div>
<div style='position:absolute;left:608px;top:799px;width:169px;height:16px;border-radius:2px;overflow:hidden;background:#F55459'><div style='position:absolute;left:0;top:0;width:31px;height:16px;background:#3CBF9A'></div><div style='position:absolute;left:31px;top:0;width:49px;height:16px;background:#FFC227'></div></div>
<svg class='ic' style='left:789px;top:800.5px;width:14px;height:14px;' viewBox='0 0 14 14'><path d='M1.5 1.5 L12.5 12.5 M12.5 1.5 L1.5 12.5' stroke='#80708F' stroke-width='1.5' stroke-linecap='round'/></svg>
<div class='card' style='left:838px;top:478px;width:566px;height:351px;'></div>
<div class='t' style='left:854.80px;top:497.99px;font-size:17.5px;color:#2B1D38;letter-spacing:0.063px;'>Worst FCP Web Vitals</div>
<svg class='ic' style='left:1033px;top:498px;width:16px;height:16px;' viewBox='0 0 16 16'><circle cx='8' cy='8' r='7' stroke='#80708F' stroke-width='1.4' fill='none' stroke-linecap='round'/><path d='M6.1 6.2 A1.9 1.9 0 1 1 8.7 7.9 C8.1 8.3 8 8.7 8 9.4' stroke='#80708F' stroke-width='1.4' fill='none' stroke-linecap='round'/><circle cx='8' cy='11.6' r='0.45' fill='#80708F' stroke='#80708F' stroke-width='0.7'/></svg>
<svg class='ic' style='left:854px;top:522px;width:16px;height:16px;' viewBox='0 0 16 16'><circle cx='8' cy='8' r='7' stroke='#3CBF9A' fill='none' stroke-width='1.5' stroke-linecap='round' stroke-linejoin='round'/><path d='M4.8 8.2 L7.2 10.6 L11.5 5.3' stroke='#3CBF9A' fill='none' stroke-width='1.5' stroke-linecap='round' stroke-linejoin='round'/></svg>
<div class='t' style='left:875.00px;top:523.57px;font-size:13.5px;color:#2B1D38;letter-spacing:-0.666px;'>27%</div>
<svg class='ic' style='left:907.5px;top:522px;width:17px;height:16px;' viewBox='0 0 17 16'><path d='M8.5 1.2 L16 14.8 H1 Z' stroke='#FFC227' fill='none' stroke-width='1.5' stroke-linecap='round' stroke-linejoin='round'/><path d='M8.5 6 V10' stroke='#FFC227' fill='none' stroke-width='1.5' stroke-linecap='round' stroke-linejoin='round'/><circle cx='8.5' cy='12.3' r='0.4' stroke='#FFC227' fill='none' stroke-width='1.5' stroke-linecap='round' stroke-linejoin='round'/></svg>
<div class='t' style='left:929.00px;top:523.57px;font-size:13.5px;color:#2B1D38;letter-spacing:-0.816px;'>5%</div>
<svg class='ic' style='left:955px;top:521px;width:14px;height:17px;' viewBox='0 0 14 17'><path d='M5 1.5 C6 4 2.5 6 1.5 9.5 C0.5 13.5 3.5 16 7 16 C10.5 16 13 13.5 12.5 10 C12.2 8 11 6.5 10 5.5 C10 7.5 9 8.5 8 9 C8.8 6 7.5 3 5 1.5 Z' stroke='#F55459' fill='none' stroke-width='1.5' stroke-linecap='round' stroke-linejoin='round'/></svg>
<div class='t' style='left:975.50px;top:523.57px;font-size:13.5px;color:#2B1D38;letter-spacing:-0.066px;'>68%</div>
<div class='card' style='left:1285px;top:495px;width:73px;height:30px;border-radius:4px;box-shadow:0 2px 0 rgba(0,0,0,0.03)'></div>
<div class='t' style='left:1296.00px;top:503.37px;font-size:13.5px;color:#2B1D38;font-weight:700;'>View All</div>
<svg class='ic' style='left:1371.1px;top:504px;width:18px;height:4px;' viewBox='0 0 18 4'><circle cx='1.6' cy='2' r='1.5' fill='#2B1D38'/><circle cx='8.2' cy='2' r='1.5' fill='#2B1D38'/><circle cx='14.8' cy='2' r='1.5' fill='#2B1D38'/></svg>
<div style='position:absolute;left:878px;top:560px;width:508px;height:1px;background:#F6F5F8'></div>
<div style='position:absolute;left:878px;top:580px;width:508px;height:1px;background:#F6F5F8'></div>
<div style='position:absolute;left:878px;top:600px;width:508px;height:1px;background:#F6F5F8'></div>
<div style='position:absolute;left:878px;top:620px;width:508px;height:1px;background:#F6F5F8'></div>
<div style='position:absolute;left:878px;top:640px;width:508px;height:1px;background:#F6F5F8'></div>
<div style='position:absolute;left:878px;top:660px;width:508px;height:1px;background:#F6F5F8'></div>
<div style='position:absolute;left:878px;top:680px;width:508px;height:1px;background:#F6F5F8'></div>
<div class='t' style='left:857.84px;top:554.67px;font-size:11.5px;color:#80708F;'>6k</div>
<div class='t' style='left:857.84px;top:574.67px;font-size:11.5px;color:#80708F;'>5k</div>
<div class='t' style='left:857.84px;top:594.67px;font-size:11.5px;color:#80708F;'>4k</div>
<div class='t' style='left:857.84px;top:614.67px;font-size:11.5px;color:#80708F;'>3k</div>
<div class='t' style='left:857.84px;top:634.67px;font-size:11.5px;color:#80708F;'>2k</div>
<div class='t' style='left:857.84px;top:654.67px;font-size:11.5px;color:#80708F;'>1k</div>
<div class='t' style='left:863.59px;top:674.67px;font-size:11.5px;color:#80708F;'>0</div>
<svg class='ic' style='left:0;top:0;width:1440px;height:1268px' viewBox='0 0 1440 1268'><path d='M878.0 608.1 L886.2 607.0 L894.6 609.2 L902.9 606.7 L911.2 603.1 L927.3 618.3 L935.7 604.7 L944.0 604.7 L952.3 608.1 L960.7 608.1 L969.0 610.8 L977.3 608.1 L985.7 609.7 L994.0 615.0 L1002.3 611.1 L1010.7 607.2 L1019.0 610.0 L1027.3 605.8 L1035.7 611.7 L1044.0 605.8 L1052.3 615.0 L1060.7 615.8 L1069.0 611.7 L1094.0 601.1 L1100.0 601.5 L1108.3 602.1 L1116.7 601.3 L1125.0 602.1 L1133.3 601.3 L1141.7 602.1 L1150.0 601.3 L1166.7 601.3 L1175.0 597.9 L1191.7 597.9 L1201.0 609.8 L1217.7 611.5 L1229.2 576.5 L1266.7 589.4 L1279.2 576.0 L1287.5 560.8 L1294.4 595.8 L1301.7 582.7 L1325.0 571.2 L1337.5 569.8 L1354.2 569.8 L1369.8 571.7 L1381.3 555.6 L1385.8 558.3' fill='none' stroke='#3CB99B' stroke-width='1.6' stroke-linejoin='round'/><path d='M878.0 631.7 L886.2 632.5 L894.6 631.1 L902.9 633.1 L911.2 635.8 L927.3 623.9 L935.7 634.4 L944.0 634.4 L952.3 631.7 L960.7 631.7 L969.0 629.7 L977.3 632.0 L985.7 630.6 L994.0 626.4 L1002.3 629.4 L1010.7 632.5 L1019.0 630.3 L1027.3 633.6 L1035.7 629.2 L1044.0 633.9 L1052.3 626.7 L1060.7 626.1 L1094.0 637.2 L1100.0 637.3 L1108.3 636.5 L1116.7 637.3 L1125.0 636.5 L1133.3 637.3 L1141.7 636.5 L1150.0 637.3 L1166.7 637.3 L1175.0 640.0 L1191.7 640.0 L1201.0 630.6 L1217.7 629.2 L1229.2 620.2 L1266.7 610.0 L1279.2 620.2 L1301.0 651.9 L1325.0 660.8 L1337.5 662.5 L1354.2 662.5 L1369.8 660.4 L1381.3 673.3 L1385.8 671.3' fill='none' stroke='#F9BE2E' stroke-width='1.6' stroke-linejoin='round'/><path d='M878.0 653.9 L894.6 654.4 L911.2 653.1 L927.3 656.7 L935.7 653.3 L944.0 653.3 L960.7 653.9 L969.0 654.7 L977.3 653.9 L985.7 654.4 L994.0 655.8 L1010.7 653.9 L1019.0 654.4 L1027.3 653.6 L1035.7 655.0 L1044.0 653.6 L1052.3 656.1 L1060.7 656.1 L1094.0 652.5 L1100.0 652.9 L1125.0 652.9 L1150.0 652.7 L1166.7 652.7 L1175.0 651.9 L1191.7 651.9 L1201.0 654.2 L1217.7 655.0 L1229.2 657.7 L1266.7 660.8 L1279.2 657.7 L1301.0 648.3 L1325.0 645.6 L1337.5 645.2 L1354.2 645.2 L1369.8 645.6 L1381.3 641.7 L1385.8 642.5' fill='none' stroke='#EF5963' stroke-width='1.6' stroke-linejoin='round'/></svg>
<div style='position:absolute;left:839px;top:705px;width:564px;height:1px;background:#D3CCDA'></div>
<div style='position:absolute;left:839px;top:746px;width:564px;height:1px;background:#D3CCDA'></div>
<div style='position:absolute;left:839px;top:787px;width:564px;height:1px;background:#D3CCDA'></div>
<svg class='ic' style='left:855px;top:717.5px;width:16px;height:16px;' viewBox='0 0 16 16'><circle cx='8' cy='8' r='7.4' fill='#fff' stroke='#DDD7E3' stroke-width='1'/><circle cx='8' cy='8' r='4.5' fill='#6C5FC7'/></svg>
<div class='t' style='left:878.70px;top:717.70px;font-size:15px;color:#3D74DB;letter-spacing:0.947px;'>/api/0/transaction_name/A</div>
<div style='position:absolute;left:1192px;top:717px;width:169px;height:16px;border-radius:2px;overflow:hidden;background:#F55459'><div style='position:absolute;left:0;top:0;width:31px;height:16px;background:#3CBF9A'></div><div style='position:absolute;left:31px;top:0;width:11px;height:16px;background:#FFC227'></div></div>
<svg class='ic' style='left:1373px;top:718.5px;width:14px;height:14px;' viewBox='0 0 14 14'><path d='M1.5 1.5 L12.5 12.5 M12.5 1.5 L1.5 12.5' stroke='#80708F' stroke-width='1.5' stroke-linecap='round'/></svg>
<svg class='ic' style='left:855px;top:758.5px;width:16px;height:16px;' viewBox='0 0 16 16'><circle cx='8' cy='8' r='7.4' fill='#fff' stroke='#DDD7E3' stroke-width='1'/></svg>
<div class='t' style='left:878.70px;top:758.70px;font-size:15px;color:#3D74DB;letter-spacing:0.959px;'>/api/0/transaction_name/B</div>
<div style='position:absolute;left:1192px;top:758px;width:169px;height:16px;border-radius:2px;overflow:hidden;background:#F55459'><div style='position:absolute;left:0;top:0;width:14px;height:16px;background:#3CBF9A'></div><div style='position:absolute;left:14px;top:0;width:53px;height:16px;background:#FFC227'></div></div>
<svg class='ic' style='left:1373px;top:759.5px;width:14px;height:14px;' viewBox='0 0 14 14'><path d='M1.5 1.5 L12.5 12.5 M12.5 1.5 L1.5 12.5' stroke='#80708F' stroke-width='1.5' stroke-linecap='round'/></svg>
<svg class='ic' style='left:855px;top:799.5px;width:16px;height:16px;' viewBox='0 0 16 16'><circle cx='8' cy='8' r='7.4' fill='#fff' stroke='#DDD7E3' stroke-width='1'/></svg>
<div class='t' style='left:878.70px;top:799.70px;font-size:15px;color:#3D74DB;letter-spacing:0.925px;'>/api/0/transaction_name/C</div>
<div style='position:absolute;left:1192px;top:799px;width:169px;height:16px;border-radius:2px;overflow:hidden;background:#F55459'><div style='position:absolute;left:0;top:0;width:31px;height:16px;background:#3CBF9A'></div><div style='position:absolute;left:31px;top:0;width:49px;height:16px;background:#FFC227'></div></div>
<svg class='ic' style='left:1373px;top:800.5px;width:14px;height:14px;' viewBox='0 0 14 14'><path d='M1.5 1.5 L12.5 12.5 M12.5 1.5 L1.5 12.5' stroke='#80708F' stroke-width='1.5' stroke-linecap='round'/></svg>
<div style='position:absolute;left:679px;top:519px;width:232px;height:176px;background:#fff;border:1px solid #C6BECF;border-radius:4px;box-shadow:0 2px 6px rgba(0,0,0,0.10);z-index:5'></div>
<svg class='ic' style='left:785px;top:512px;width:22px;height:10px;z-index:6' viewBox='0 0 22 10'><path d='M3.6 8.6 L10.3 1.6 L17 8.6 Z' fill='#fff'/><path d='M4.3 7.5 L10.3 1.6 L16.3 7.5' fill='none' stroke='#C6BECF' stroke-width='1'/></svg>
<svg class='ic' style='left:689px;top:529px;width:16px;height:16px;z-index:7' viewBox='0 0 16 16'><circle cx='8' cy='8' r='7.4' fill='#fff' stroke='#DDD7E3' stroke-width='1'/><circle cx='8' cy='8' r='4.5' fill='#6C5FC7'/></svg>
<div class='t' style='left:712.80px;top:528.80px;font-size:15px;color:#2B1D38;letter-spacing:0.340px;z-index:7;'>Worst LCP Web Vitals</div>
<div style='position:absolute;left:680px;top:554px;width:230px;height:1px;background:#DCD6E2;z-index:6'></div>
<svg class='ic' style='left:689px;top:564px;width:16px;height:16px;z-index:7' viewBox='0 0 16 16'><circle cx='8' cy='8' r='7.4' fill='#fff' stroke='#DDD7E3' stroke-width='1'/></svg>
<div class='t' style='left:712.80px;top:563.80px;font-size:15px;color:#2B1D38;letter-spacing:0.297px;z-index:7;'>Worst FCP Web Vitals</div>
<div style='position:absolute;left:680px;top:589px;width:230px;height:1px;background:#DCD6E2;z-index:6'></div>
<svg class='ic' style='left:689px;top:599px;width:16px;height:16px;z-index:7' viewBox='0 0 16 16'><circle cx='8' cy='8' r='7.4' fill='#fff' stroke='#DDD7E3' stroke-width='1'/></svg>
<div class='t' style='left:712.80px;top:598.80px;font-size:15px;color:#2B1D38;letter-spacing:0.326px;z-index:7;'>Worst FID Web Vitals</div>
<div style='position:absolute;left:680px;top:624px;width:230px;height:1px;background:#DCD6E2;z-index:6'></div>
<svg class='ic' style='left:689px;top:634px;width:16px;height:16px;z-index:7' viewBox='0 0 16 16'><circle cx='8' cy='8' r='7.4' fill='#fff' stroke='#DDD7E3' stroke-width='1'/></svg>
<div class='t' style='left:712.80px;top:633.80px;font-size:15px;color:#2B1D38;letter-spacing:0.602px;z-index:7;'>Most Related Issues</div>
<div style='position:absolute;left:680px;top:659px;width:230px;height:1px;background:#DCD6E2;z-index:6'></div>
<svg class='ic' style='left:689px;top:669px;width:16px;height:16px;z-index:7' viewBox='0 0 16 16'><circle cx='8' cy='8' r='7.4' fill='#fff' stroke='#DDD7E3' stroke-width='1'/></svg>
<div class='t' style='left:712.80px;top:668.80px;font-size:15px;color:#2B1D38;letter-spacing:0.229px;z-index:7;'>Slow HTTP Ops</div>
<div class='card' style='left:254px;top:848px;width:1152px;height:337px;box-shadow:0 2px 0 rgba(0,0,0,0.04)'></div>
<div style='position:absolute;left:255px;top:849px;width:1150px;height:45px;background:#FAF9FB;border-bottom:1px solid #C6BECF;border-radius:4px 4px 0 0'></div>
<svg class='ic' style='left:271px;top:862px;width:16px;height:16px;' viewBox='0 0 16 16'><path d='M8 0.4 L10.3 5.2 L15.6 5.9 L11.8 9.6 L12.7 14.8 L8 12.3 L3.3 14.8 L4.2 9.6 L0.4 5.9 L5.7 5.2 Z' fill='#F8B62D' stroke='#F8B62D' stroke-width='1' stroke-linejoin='round'/></svg>
<div class='t' style='left:305.60px;top:865.77px;font-size:11.5px;color:#4D4158;font-weight:700;letter-spacing:-0.120px;'>TRANSACTION</div>
<div class='t' style='left:591.00px;top:865.77px;font-size:11.5px;color:#4D4158;font-weight:700;letter-spacing:0.112px;'>PROJECT</div>
<div class='t' style='left:867.90px;top:865.77px;font-size:11.5px;color:#4D4158;font-weight:700;letter-spacing:-0.391px;'>TPM</div>
<div class='t' style='left:937.90px;top:865.77px;font-size:11.5px;color:#4D4158;font-weight:700;letter-spacing:-0.250px;'>FCP</div>
<div class='t' style='left:1005.50px;top:865.77px;font-size:11.5px;color:#4D4158;font-weight:700;letter-spacing:-0.500px;'>LCP</div>
<div class='t' style='left:1076.40px;top:865.77px;font-size:11.5px;color:#4D4158;font-weight:700;letter-spacing:-0.266px;'>FID</div>
<div class='t' style='left:1139.70px;top:865.77px;font-size:11.5px;color:#4D4158;font-weight:700;letter-spacing:-0.500px;'>CLS</div>
<div class='t' style='left:1199.10px;top:865.77px;font-size:11.5px;color:#4D4158;font-weight:700;letter-spacing:-0.104px;'>UNIQUE USERS</div>
<div class='t' style='left:1307.70px;top:865.77px;font-size:11.5px;color:#4D4158;font-weight:700;letter-spacing:-0.111px;'>USER MISERY</div>
<svg class='ic' style='left:271px;top:905px;width:16px;height:16px;' viewBox='0 0 16 16'><path d='M8 0.4 L10.3 5.2 L15.6 5.9 L11.8 9.6 L12.7 14.8 L8 12.3 L3.3 14.8 L4.2 9.6 L0.4 5.9 L5.7 5.2 Z' fill='#F8B62D' stroke='#F8B62D' stroke-width='1' stroke-linejoin='round'/></svg>
<div class='t' style='left:305.60px;top:905.98px;font-size:15.5px;color:#3D74DB;letter-spacing:0.662px;'>/api/0/transaction_name</div>
<svg class='ic' style='left:591px;top:905px;width:16px;height:16px;' viewBox='0 0 16 16'><rect width='16' height='16' fill='#FCC02A'/><text x='15.4' y='15' text-anchor='end' font-family='Liberation Sans' font-weight='700' font-size='10' letter-spacing='-0.6' fill='#1F1A30'>JS</text></svg>
<div class='t' style='left:614.20px;top:906.40px;font-size:15px;color:#3E3446;letter-spacing:0.235px;'>PlantMood</div>
<div class='t' style='left:866.37px;top:906.40px;font-size:15px;color:#3E3446;'>453</div>
<div class='t' style='left:911.20px;top:906.40px;font-size:15px;color:#3E3446;'>342 ms</div>
<div class='t' style='left:978.30px;top:906.40px;font-size:15px;color:#3E3446;'>123 ms</div>
<div class='t' style='left:1053.54px;top:906.40px;font-size:15px;color:#3E3446;'>43 ms</div>
<div class='t' style='left:1132.50px;top:906.40px;font-size:15px;color:#3E3446;'>0.55</div>
<div class='t' style='left:1236.67px;top:906.95px;font-size:14px;color:#3E3446;'>112</div>
<svg class='ic' style='left:1269px;top:905px;width:16px;height:16px;' viewBox='0 0 16 16'><circle cx='8' cy='5' r='3.7' stroke='#3E3446' stroke-width='1.5' fill='none' stroke-linejoin='round'/><path d='M1.2 15 H14.8 V12.8 C14.8 10.8 13 9.2 11 9.2 H5 C3 9.2 1.2 10.8 1.2 12.8 Z' stroke='#3E3446' stroke-width='1.5' fill='none' stroke-linejoin='round'/></svg>
<svg class='ic' style='left:1309px;top:904px;width:80px;height:20px;' viewBox='0 0 80 20'><rect x='0' y='0' width='5' height='20' fill='#3F3F72'/><rect x='8' y='0' width='5' height='20' fill='#3F3F72'/><rect x='16' y='0' width='5' height='20' fill='#3F3F72'/><rect x='24' y='0' width='5' height='20' fill='#3F3F72'/><rect x='32' y='0' width='5' height='20' fill='#3F3F72'/><rect x='40' y='0' width='5' height='20' fill='#3F3F72'/><rect x='48' y='0' width='5' height='20' fill='#3F3F72'/><rect x='56' y='0' width='5' height='20' fill='#3F3F72'/><rect x='64' y='0' width='5' height='20' fill='#EFEDF3'/><rect x='72' y='0' width='5' height='20' fill='#EFEDF3'/></svg>
<div style='position:absolute;left:255px;top:934px;width:1150px;height:1px;background:#D3CCDA'></div>
<svg class='ic' style='left:271px;top:946px;width:16px;height:16px;' viewBox='0 0 16 16'><path d='M8 0.4 L10.3 5.2 L15.6 5.9 L11.8 9.6 L12.7 14.8 L8 12.3 L3.3 14.8 L4.2 9.6 L0.4 5.9 L5.7 5.2 Z' fill='#F8B62D' stroke='#F8B62D' stroke-width='1' stroke-linejoin='round'/></svg>
<div class='t' style='left:305.60px;top:946.98px;font-size:15.5px;color:#3D74DB;letter-spacing:0.662px;'>/api/0/transaction_name</div>
<svg class='ic' style='left:591px;top:946px;width:16px;height:16px;' viewBox='0 0 16 16'><rect width='16' height='16' fill='#FCC02A'/><text x='15.4' y='15' text-anchor='end' font-family='Liberation Sans' font-weight='700' font-size='10' letter-spacing='-0.6' fill='#1F1A30'>JS</text></svg>
<div class='t' style='left:614.20px;top:947.40px;font-size:15px;color:#3E3446;letter-spacing:0.235px;'>PlantMood</div>
<div class='t' style='left:866.37px;top:947.40px;font-size:15px;color:#3E3446;'>256</div>
<div class='t' style='left:911.20px;top:947.40px;font-size:15px;color:#3E3446;'>546 ms</div>
<div class='t' style='left:978.30px;top:947.40px;font-size:15px;color:#3E3446;'>124 ms</div>
<div class='t' style='left:1053.54px;top:947.40px;font-size:15px;color:#3E3446;'>45 ms</div>
<div class='t' style='left:1132.50px;top:947.40px;font-size:15px;color:#3E3446;'>0.54</div>
<div class='t' style='left:1251.20px;top:947.95px;font-size:14px;color:#3E3446;'>2</div>
<svg class='ic' style='left:1269px;top:946px;width:16px;height:16px;' viewBox='0 0 16 16'><circle cx='8' cy='5' r='3.7' stroke='#3E3446' stroke-width='1.5' fill='none' stroke-linejoin='round'/><path d='M1.2 15 H14.8 V12.8 C14.8 10.8 13 9.2 11 9.2 H5 C3 9.2 1.2 10.8 1.2 12.8 Z' stroke='#3E3446' stroke-width='1.5' fill='none' stroke-linejoin='round'/></svg>
<svg class='ic' style='left:1309px;top:945px;width:80px;height:20px;' viewBox='0 0 80 20'><rect x='0' y='0' width='5' height='20' fill='#3F3F72'/><rect x='8' y='0' width='5' height='20' fill='#3F3F72'/><rect x='16' y='0' width='5' height='20' fill='#3F3F72'/><rect x='24' y='0' width='5' height='20' fill='#3F3F72'/><rect x='32' y='0' width='5' height='20' fill='#3F3F72'/><rect x='40' y='0' width='5' height='20' fill='#EFEDF3'/><rect x='48' y='0' width='5' height='20' fill='#EFEDF3'/><rect x='56' y='0' width='5' height='20' fill='#EFEDF3'/><rect x='64' y='0' width='5' height='20' fill='#EFEDF3'/><rect x='72' y='0' width='5' height='20' fill='#EFEDF3'/></svg>
<div style='position:absolute;left:255px;top:975px;width:1150px;height:1px;background:#D3CCDA'></div>
<svg class='ic' style='left:271px;top:987px;width:16px;height:16px;' viewBox='0 0 16 16'><path d='M8 0.4 L10.3 5.2 L15.6 5.9 L11.8 9.6 L12.7 14.8 L8 12.3 L3.3 14.8 L4.2 9.6 L0.4 5.9 L5.7 5.2 Z' fill='none' stroke='#BDB5C6' stroke-width='1.2' stroke-linejoin='round'/></svg>
<div class='t' style='left:305.60px;top:987.98px;font-size:15.5px;color:#3D74DB;letter-spacing:0.662px;'>/api/0/transaction_name</div>
<svg class='ic' style='left:591px;top:987px;width:16px;height:16px;' viewBox='0 0 16 16'><path d='M0 1 H3.4 L8 9 L12.6 1 H16 L8 14.5 Z' fill='#3CC29A'/><path d='M3.4 1 H6.2 L8 4.3 L9.8 1 H12.6 L8 9 Z' fill='#3E3A75'/></svg>
<div class='t' style='left:614.20px;top:988.40px;font-size:15px;color:#3E3446;letter-spacing:0.192px;'>Clematis</div>
<div class='t' style='left:866.37px;top:988.40px;font-size:15px;color:#3E3446;'>788</div>
<div class='t' style='left:911.20px;top:988.40px;font-size:15px;color:#3E3446;'>361 ms</div>
<div class='t' style='left:978.30px;top:988.40px;font-size:15px;color:#3E3446;'>184 ms</div>
<div class='t' style='left:1053.54px;top:988.40px;font-size:15px;color:#3E3446;'>23 ms</div>
<div class='t' style='left:1132.50px;top:988.40px;font-size:15px;color:#3E3446;'>0.86</div>
<div class='t' style='left:1243.42px;top:988.95px;font-size:14px;color:#3E3446;'>67</div>
<svg class='ic' style='left:1269px;top:987px;width:16px;height:16px;' viewBox='0 0 16 16'><circle cx='8' cy='5' r='3.7' stroke='#3E3446' stroke-width='1.5' fill='none' stroke-linejoin='round'/><path d='M1.2 15 H14.8 V12.8 C14.8 10.8 13 9.2 11 9.2 H5 C3 9.2 1.2 10.8 1.2 12.8 Z' stroke='#3E3446' stroke-width='1.5' fill='none' stroke-linejoin='round'/></svg>
<svg class='ic' style='left:1309px;top:986px;width:80px;height:20px;' viewBox='0 0 80 20'><rect x='0' y='0' width='5' height='20' fill='#3F3F72'/><rect x='8' y='0' width='5' height='20' fill='#3F3F72'/><rect x='16' y='0' width='5' height='20' fill='#3F3F72'/><rect x='24' y='0' width='5' height='20' fill='#EFEDF3'/><rect x='32' y='0' width='5' height='20' fill='#EFEDF3'/><rect x='40' y='0' width='5' height='20' fill='#EFEDF3'/><rect x='48' y='0' width='5' height='20' fill='#EFEDF3'/><rect x='56' y='0' width='5' height='20' fill='#EFEDF3'/><rect x='64' y='0' width='5' height='20' fill='#EFEDF3'/><rect x='72' y='0' width='5' height='20' fill='#EFEDF3'/></svg>
<div style='position:absolute;left:255px;top:1016px;width:1150px;height:1px;background:#D3CCDA'></div>
<svg class='ic' style='left:271px;top:1028px;width:16px;height:16px;' viewBox='0 0 16 16'><path d='M8 0.4 L10.3 5.2 L15.6 5.9 L11.8 9.6 L12.7 14.8 L8 12.3 L3.3 14.8 L4.2 9.6 L0.4 5.9 L5.7 5.2 Z' fill='none' stroke='#BDB5C6' stroke-width='1.2' stroke-linejoin='round'/></svg>
<div class='t' style='left:305.60px;top:1028.98px;font-size:15.5px;color:#3D74DB;letter-spacing:0.662px;'>/api/0/transaction_name</div>
<svg class='ic' style='left:591px;top:1028px;width:16px;height:16px;' viewBox='0 0 16 16'><path d='M0 1 H3.4 L8 9 L12.6 1 H16 L8 14.5 Z' fill='#3CC29A'/><path d='M3.4 1 H6.2 L8 4.3 L9.8 1 H12.6 L8 9 Z' fill='#3E3A75'/></svg>
<div class='t' style='left:614.20px;top:1029.40px;font-size:15px;color:#3E3446;'>Chamise</div>
<div class='t' style='left:866.37px;top:1029.40px;font-size:15px;color:#3E3446;'>454</div>
<div class='t' style='left:911.20px;top:1029.40px;font-size:15px;color:#3E3446;'>157 ms</div>
<div class='t' style='left:978.30px;top:1029.40px;font-size:15px;color:#3E3446;'>178 ms</div>
<div class='t' style='left:1053.54px;top:1029.40px;font-size:15px;color:#3E3446;'>34 ms</div>
<div class='t' style='left:1132.50px;top:1029.40px;font-size:15px;color:#3E3446;'>0.18</div>
<div class='t' style='left:1235.64px;top:1029.95px;font-size:14px;color:#3E3446;'>201</div>
<svg class='ic' style='left:1269px;top:1028px;width:16px;height:16px;' viewBox='0 0 16 16'><circle cx='8' cy='5' r='3.7' stroke='#3E3446' stroke-width='1.5' fill='none' stroke-linejoin='round'/><path d='M1.2 15 H14.8 V12.8 C14.8 10.8 13 9.2 11 9.2 H5 C3 9.2 1.2 10.8 1.2 12.8 Z' stroke='#3E3446' stroke-width='1.5' fill='none' stroke-linejoin='round'/></svg>
<svg class='ic' style='left:1309px;top:1027px;width:80px;height:20px;' viewBox='0 0 80 20'><rect x='0' y='0' width='5' height='20' fill='#3F3F72'/><rect x='8' y='0' width='5' height='20' fill='#3F3F72'/><rect x='16' y='0' width='5' height='20' fill='#3F3F72'/><rect x='24' y='0' width='5' height='20' fill='#3F3F72'/><rect x='32' y='0' width='5' height='20' fill='#3F3F72'/><rect x='40' y='0' width='5' height='20' fill='#3F3F72'/><rect x='48' y='0' width='5' height='20' fill='#EFEDF3'/><rect x='56' y='0' width='5' height='20' fill='#EFEDF3'/><rect x='64' y='0' width='5' height='20' fill='#EFEDF3'/><rect x='72' y='0' width='5' height='20' fill='#EFEDF3'/></svg>
<div style='position:absolute;left:255px;top:1057px;width:1150px;height:1px;background:#D3CCDA'></div>
<svg class='ic' style='left:271px;top:1069px;width:16px;height:16px;' viewBox='0 0 16 16'><path d='M8 0.4 L10.3 5.2 L15.6 5.9 L11.8 9.6 L12.7 14.8 L8 12.3 L3.3 14.8 L4.2 9.6 L0.4 5.9 L5.7 5.2 Z' fill='none' stroke='#BDB5C6' stroke-width='1.2' stroke-linejoin='round'/></svg>
<div class='t' style='left:305.60px;top:1069.98px;font-size:15.5px;color:#3D74DB;letter-spacing:0.662px;'>/api/0/transaction_name</div>
<svg class='ic' style='left:591px;top:1069px;width:16px;height:16px;' viewBox='0 0 16 16'><rect width='16' height='16' fill='#20232A'/><g fill='none' stroke='#3FB6C4' stroke-width='0.9'><ellipse cx='8' cy='8' rx='6.2' ry='2.4'/><ellipse cx='8' cy='8' rx='6.2' ry='2.4' transform='rotate(60 8 8)'/><ellipse cx='8' cy='8' rx='6.2' ry='2.4' transform='rotate(120 8 8)'/></g><circle cx='8' cy='8' r='1.1' fill='#8FD3F0'/></svg>
<div class='t' style='left:614.20px;top:1070.40px;font-size:15px;color:#3E3446;letter-spacing:0.289px;'>Elderberry</div>
<div class='t' style='left:866.37px;top:1070.40px;font-size:15px;color:#3E3446;'>451</div>
<div class='t' style='left:911.20px;top:1070.40px;font-size:15px;color:#3E3446;'>363 ms</div>
<div class='t' style='left:978.30px;top:1070.40px;font-size:15px;color:#3E3446;'>124 ms</div>
<div class='t' style='left:1053.54px;top:1070.40px;font-size:15px;color:#3E3446;'>45 ms</div>
<div class='t' style='left:1132.50px;top:1070.40px;font-size:15px;color:#3E3446;'>0.73</div>
<div class='t' style='left:1251.20px;top:1070.95px;font-size:14px;color:#3E3446;'>8</div>
<svg class='ic' style='left:1269px;top:1069px;width:16px;height:16px;' viewBox='0 0 16 16'><circle cx='8' cy='5' r='3.7' stroke='#3E3446' stroke-width='1.5' fill='none' stroke-linejoin='round'/><path d='M1.2 15 H14.8 V12.8 C14.8 10.8 13 9.2 11 9.2 H5 C3 9.2 1.2 10.8 1.2 12.8 Z' stroke='#3E3446' stroke-width='1.5' fill='none' stroke-linejoin='round'/></svg>
<svg class='ic' style='left:1309px;top:1068px;width:80px;height:20px;' viewBox='0 0 80 20'><rect x='0' y='0' width='5' height='20' fill='#3F3F72'/><rect x='8' y='0' width='5' height='20' fill='#3F3F72'/><rect x='16' y='0' width='5' height='20' fill='#3F3F72'/><rect x='24' y='0' width='5' height='20' fill='#3F3F72'/><rect x='32' y='0' width='5' height='20' fill='#EFEDF3'/><rect x='40' y='0' width='5' height='20' fill='#EFEDF3'/><rect x='48' y='0' width='5' height='20' fill='#EFEDF3'/><rect x='56' y='0' width='5' height='20' fill='#EFEDF3'/><rect x='64' y='0' width='5' height='20' fill='#EFEDF3'/><rect x='72' y='0' width='5' height='20' fill='#EFEDF3'/></svg>
<div style='position:absolute;left:255px;top:1098px;width:1150px;height:1px;background:#D3CCDA'></div>
<svg class='ic' style='left:271px;top:1110px;width:16px;height:16px;' viewBox='0 0 16 16'><path d='M8 0.4 L10.3 5.2 L15.6 5.9 L11.8 9.6 L12.7 14.8 L8 12.3 L3.3 14.8 L4.2 9.6 L0.4 5.9 L5.7 5.2 Z' fill='none' stroke='#BDB5C6' stroke-width='1.2' stroke-linejoin='round'/></svg>
<div class='t' style='left:305.60px;top:1110.98px;font-size:15.5px;color:#3D74DB;letter-spacing:0.662px;'>/api/0/transaction_name</div>
<svg class='ic' style='left:591px;top:1110px;width:16px;height:16px;' viewBox='0 0 16 16'><path d='M2 1 L14 8 L2 15 Z' fill='none' stroke='#0071B5' stroke-width='2'/><path d='M14 1 L2 8 L14 15 Z' fill='none' stroke='#002A41' stroke-width='2'/></svg>
<div class='t' style='left:614.20px;top:1111.40px;font-size:15px;color:#3E3446;letter-spacing:0.268px;'>Baccharis</div>
<div class='t' style='left:866.37px;top:1111.40px;font-size:15px;color:#3E3446;'>674</div>
<div class='t' style='left:911.20px;top:1111.40px;font-size:15px;color:#3E3446;'>452 ms</div>
<div class='t' style='left:978.30px;top:1111.40px;font-size:15px;color:#3E3446;'>141 ms</div>
<div class='t' style='left:1053.54px;top:1111.40px;font-size:15px;color:#3E3446;'>23 ms</div>
<div class='t' style='left:1132.50px;top:1111.40px;font-size:15px;color:#3E3446;'>0.92</div>
<div class='t' style='left:1243.42px;top:1111.95px;font-size:14px;color:#3E3446;'>10</div>
<svg class='ic' style='left:1269px;top:1110px;width:16px;height:16px;' viewBox='0 0 16 16'><circle cx='8' cy='5' r='3.7' stroke='#3E3446' stroke-width='1.5' fill='none' stroke-linejoin='round'/><path d='M1.2 15 H14.8 V12.8 C14.8 10.8 13 9.2 11 9.2 H5 C3 9.2 1.2 10.8 1.2 12.8 Z' stroke='#3E3446' stroke-width='1.5' fill='none' stroke-linejoin='round'/></svg>
<svg class='ic' style='left:1309px;top:1109px;width:80px;height:20px;' viewBox='0 0 80 20'><rect x='0' y='0' width='5' height='20' fill='#3F3F72'/><rect x='8' y='0' width='5' height='20' fill='#EFEDF3'/><rect x='16' y='0' width='5' height='20' fill='#EFEDF3'/><rect x='24' y='0' width='5' height='20' fill='#EFEDF3'/><rect x='32' y='0' width='5' height='20' fill='#EFEDF3'/><rect x='40' y='0' width='5' height='20' fill='#EFEDF3'/><rect x='48' y='0' width='5' height='20' fill='#EFEDF3'/><rect x='56' y='0' width='5' height='20' fill='#EFEDF3'/><rect x='64' y='0' width='5' height='20' fill='#EFEDF3'/><rect x='72' y='0' width='5' height='20' fill='#EFEDF3'/></svg>
<div style='position:absolute;left:255px;top:1139px;width:1150px;height:1px;background:#D3CCDA'></div>
<svg class='ic' style='left:271px;top:1151px;width:16px;height:16px;' viewBox='0 0 16 16'><path d='M8 0.4 L10.3 5.2 L15.6 5.9 L11.8 9.6 L12.7 14.8 L8 12.3 L3.3 14.8 L4.2 9.6 L0.4 5.9 L5.7 5.2 Z' fill='none' stroke='#BDB5C6' stroke-width='1.2' stroke-linejoin='round'/></svg>
<div class='t' style='left:305.60px;top:1151.98px;font-size:15.5px;color:#3D74DB;letter-spacing:0.662px;'>/api/0/transaction_name</div>
<svg class='ic' style='left:591px;top:1151px;width:16px;height:16px;' viewBox='0 0 16 16'><rect width='16' height='16' fill='#EF4E55'/><path d='M4 9.5 C7 9 10.5 7 9.5 4.8 C8.5 3.5 5.5 5.5 5 9 C4.6 12 7.5 12.6 11.5 10.5' fill='none' stroke='#fff' stroke-width='1.6' stroke-linecap='round'/></svg>
<div class='t' style='left:614.20px;top:1152.40px;font-size:15px;color:#3E3446;letter-spacing:0.138px;'>Poppy</div>
<div class='t' style='left:866.37px;top:1152.40px;font-size:15px;color:#3E3446;'>683</div>
<div class='t' style='left:911.20px;top:1152.40px;font-size:15px;color:#3E3446;'>335 ms</div>
<div class='t' style='left:978.30px;top:1152.40px;font-size:15px;color:#3E3446;'>165 ms</div>
<div class='t' style='left:1053.54px;top:1152.40px;font-size:15px;color:#3E3446;'>16 ms</div>
<div class='t' style='left:1132.50px;top:1152.40px;font-size:15px;color:#3E3446;'>0.26</div>
<div class='t' style='left:1243.42px;top:1152.95px;font-size:14px;color:#3E3446;'>78</div>
<svg class='ic' style='left:1269px;top:1151px;width:16px;height:16px;' viewBox='0 0 16 16'><circle cx='8' cy='5' r='3.7' stroke='#3E3446' stroke-width='1.5' fill='none' stroke-linejoin='round'/><path d='M1.2 15 H14.8 V12.8 C14.8 10.8 13 9.2 11 9.2 H5 C3 9.2 1.2 10.8 1.2 12.8 Z' stroke='#3E3446' stroke-width='1.5' fill='none' stroke-linejoin='round'/></svg>
<svg class='ic' style='left:1309px;top:1150px;width:80px;height:20px;' viewBox='0 0 80 20'><rect x='0' y='0' width='5' height='20' fill='#EFEDF3'/><rect x='8' y='0' width='5' height='20' fill='#EFEDF3'/><rect x='16' y='0' width='5' height='20' fill='#EFEDF3'/><rect x='24' y='0' width='5' height='20' fill='#EFEDF3'/><rect x='32' y='0' width='5' height='20' fill='#EFEDF3'/><rect x='40' y='0' width='5' height='20' fill='#EFEDF3'/><rect x='48' y='0' width='5' height='20' fill='#EFEDF3'/><rect x='56' y='0' width='5' height='20' fill='#EFEDF3'/><rect x='64' y='0' width='5' height='20' fill='#EFEDF3'/><rect x='72' y='0' width='5' height='20' fill='#EFEDF3'/></svg>
<div style='position:absolute;left:1324px;top:1198px;width:80px;height:30px;border:1px solid #C6BECF;border-radius:4px;background:#fff;box-shadow:0 2px 0 rgba(0,0,0,0.04);overflow:hidden'><div style='position:absolute;left:0;top:0;width:41px;height:30px;background:#F7F6F9;border-right:1px solid #C6BECF'></div></div>
<svg class='ic' style='left:1338px;top:1205px;width:12px;height:18px;' viewBox='0 0 12 18'><path d='M9.5 2.5 L3 9 L9.5 15.5' fill='none' stroke='#80708F' stroke-width='1.6' stroke-linecap='round' stroke-linejoin='round'/></svg>
<svg class='ic' style='left:1378px;top:1205px;width:12px;height:18px;' viewBox='0 0 12 18'><path d='M2.5 2.5 L9 9 L2.5 15.5' fill='none' stroke='#2B1D38' stroke-width='1.6' stroke-linecap='round' stroke-linejoin='round'/></svg>
</body></html>
